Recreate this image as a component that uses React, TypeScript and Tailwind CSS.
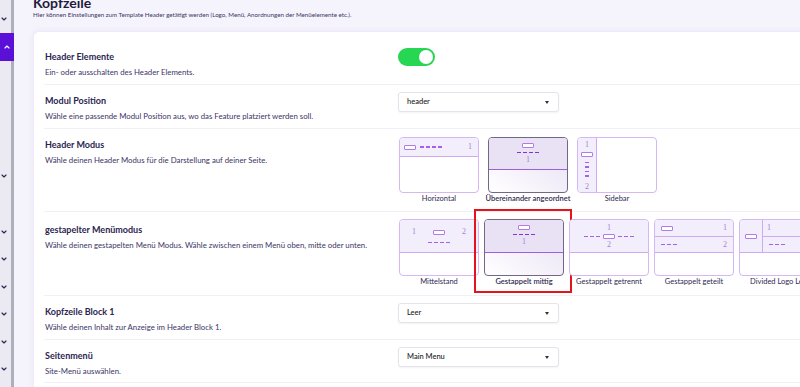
import { ChevronDown, ChevronUp } from "lucide-react";
import type { ReactNode } from "react";

const FONT = "font-['Lato','Noto_Sans',sans-serif]";

function Dashes({ n, dark }: { n: number; dark?: boolean }) {
  return (
    <span className="flex gap-[2px]">
      {Array.from({ length: n }).map((_, i) => (
        <span
          key={i}
          className={`h-[1.4px] w-[4px] ${dark ? "bg-[#8a2fe0]" : "bg-[#a660ea]"}`}
        />
      ))}
    </span>
  );
}

function Box() {
  return <span className="block h-[5px] w-[12px] shrink-0 rounded-[1px] border border-[#b27be9] bg-white" />;
}

function Num({ children }: { children: ReactNode }) {
  return (
    <span className="block font-['Liberation_Serif',serif] text-[8px] leading-[8px] text-[#a47fd6]">
      {children}
    </span>
  );
}

function Thumb({
  label,
  selected,
  height,
  children,
}: {
  label: string;
  selected?: boolean;
  height: string;
  children: ReactNode;
}) {
  return (
    <div className="flex w-[80px] flex-col items-center">
      <div
        className={`relative w-full overflow-hidden rounded-[4px] border text-[8px] leading-[8px] ${height} ${
          selected
            ? "border-[#736686] bg-linear-to-tr from-white to-[#e7dff3]"
            : "border-[#d6b6f4] bg-white"
        }`}
      >
        {children}
      </div>
      <span
        className={`mt-[1px] whitespace-nowrap text-[7.5px] leading-[9px] text-[#2f2a52] ${
          selected ? "font-semibold" : ""
        }`}
      >
        {label}
      </span>
    </div>
  );
}

function Select({ value }: { value: string }) {
  return (
    <div className="flex h-[20px] w-[161px] items-center justify-between rounded-[3px] border border-[#e4e2ea] bg-white pl-[8px] pr-[9px] shadow-[0_1px_2px_rgba(0,0,0,0.05)]">
      <span className="text-[7.5px] font-medium text-[#222]">{value}</span>
      <span className="h-0 w-0 border-x-[2.5px] border-t-[3px] border-x-transparent border-t-[#333]" />
    </div>
  );
}

function Row({
  title,
  desc,
  h,
  children,
  pt = "pt-[10px]",
}: {
  title: string;
  desc: string;
  h: string;
  children: ReactNode;
  pt?: string;
}) {
  return (
    <div className={`grid grid-cols-[354px_1fr] border-b border-[#f1eff5] ${h}`}>
      <div className={`pl-[1px] ${pt}`}>
        <div className="text-[9px] font-bold leading-[11px] text-[#2b2550]">{title}</div>
        <div className="mt-[5px] whitespace-nowrap text-[7.8px] leading-[11px] text-[#3b3566]">{desc}</div>
      </div>
      <div className="pt-[7px]">{children}</div>
    </div>
  );
}

function Chev({ up }: { up?: boolean }) {
  const C = up ? ChevronUp : ChevronDown;
  return <C size={8} strokeWidth={3.5} className={up ? "text-white" : "text-[#2b2550]"} />;
}

export default function App() {
  const band = "border-b border-[#cfa9f2] bg-[#f3eefb]";
  return (
    <div className={`flex h-[387px] w-[800px] overflow-hidden bg-[#f5f3fb] ${FONT}`}>
      {/* sidebar */}
      <div className="flex w-[14px] shrink-0 flex-col bg-[#ebeaf2] shadow-[inset_-3px_0_0_#adb0ba]">
        <div className="h-[5px]" />
        <div className="flex h-[28px] items-center"><Chev /></div>
        <div className="flex h-[28px] items-center justify-center bg-[#5a10d6]"><Chev up /></div>
        <div className="h-[101px]" />
        <div className="flex h-[27px] items-center"><Chev /></div>
        <div className="h-[29px]" />
        {[0, 1, 2, 3, 4, 5].map((i) => (
          <div key={i} className="flex h-[27.5px] items-center"><Chev /></div>
        ))}
      </div>

      {/* main */}
      <div className="flex min-w-0 flex-1 flex-col pl-[19px]">
        <div className="h-[31px] shrink-0">
          <h1 className="mt-[-4px] text-[14px] font-bold leading-[14px] text-[#1f1b40]">Kopfzeile</h1>
          <p className="mt-[1px] whitespace-nowrap text-[6.2px] leading-[8px] text-[#3b3566]">
            Hier können Einstellungen zum Template Header getätigt werden (Logo, Menü, Anordnungen der Menüelemente etc.).
          </p>
        </div>

        <div className="w-[800px] flex-1 rounded-tl-[6px] border-l border-t border-[#efe9fa] bg-white pt-[9px] shadow-[0_0_6px_rgba(120,90,200,0.08)]">
          <div className="ml-[10px]">
            <Row title="Header Elemente" desc="Ein- oder ausschalten des Header Elements." h="h-[44px]">
              <div className="flex h-[18px] w-[37px] items-center justify-end rounded-full bg-[#27d652] pr-[2px]">
                <span className="h-[14px] w-[14px] rounded-full bg-white" />
              </div>
            </Row>

            <Row
              title="Modul Position"
              desc="Wähle eine passende Modul Position aus, wo das Feature platziert werden soll."
              h="h-[44px]"
            >
              <Select value="header" />
            </Row>

            <Row
              title="Header Modus"
              desc="Wähle deinen Header Modus für die Darstellung auf deiner Seite."
              h="h-[83px]"
            >
              <div className="ml-[1px] mt-[1px] flex gap-[9px]">
                <Thumb label="Horizontal" height="h-[56px]">
                  <div className={`flex h-[19px] items-center px-[4px] ${band}`}>
                    <Box />
                    <span className="ml-[4px]"><Dashes n={4} /></span>
                    <span className="ml-auto mr-[2px]"><Num>1</Num></span>
                  </div>
                </Thumb>
                <Thumb label="Übereinander angeordnet" selected height="h-[56px]">
                  <div className="flex h-[32px] flex-col items-center border-b border-[#9b5fe0] bg-[#e9e2f5] pt-[5px]">
                    <Box />
                    <span className="mt-[4px]"><Dashes n={4} dark /></span>
                    <span className="mt-[3px]"><Num>1</Num></span>
                  </div>
                </Thumb>
                <Thumb label="Sidebar" height="h-[56px]">
                  <div className="flex h-full">
                    <div className="flex w-[19px] flex-col items-center border-r border-[#cfa9f2] bg-[#f3eefb] pt-[3px]">
                      <Num>1</Num>
                      <span className="mt-[3px]"><Box /></span>
                      <div className="mt-[5px] flex flex-col gap-[3px]">
                        {[0, 1, 2, 3].map((i) => (
                          <span key={i} className="h-[1.4px] w-[4px] bg-[#a660ea]" />
                        ))}
                      </div>
                      <span className="mt-[6px]"><Num>2</Num></span>
                    </div>
                  </div>
                </Thumb>
              </div>
            </Row>

            <Row
              title="gestapelter Menümodus"
              desc="Wähle deinen gestapelten Menü Modus. Wähle zwischen einem Menü oben, mitte oder unten."
              h="h-[84px]"
              pt="pt-[12px]"
            >
              <div className="ml-[1px] flex gap-[5px]">
                <Thumb label="Mittelstand" height="h-[57px]">
                  <div className={`relative h-[33px] ${band}`}>
                    <div className="flex items-center justify-between px-[12px] pt-[8px]">
                      <Num>1</Num>
                      <Box />
                      <Num>2</Num>
                    </div>
                    <div className="mt-[6px] flex justify-center"><Dashes n={4} /></div>
                  </div>
                </Thumb>
                <div className="relative">
                  <Thumb label="Gestappelt mittig" selected height="h-[57px]">
                    <div className="flex h-[33px] flex-col items-center border-b border-[#9b5fe0] bg-[#e9e2f5] pt-[5px]">
                      <Box />
                      <span className="mt-[4px]"><Dashes n={4} dark /></span>
                      <span className="mt-[3px]"><Num>1</Num></span>
                    </div>
                  </Thumb>
                  <div className="pointer-events-none absolute left-[-10px] top-[-10px] h-[84px] w-[98px] border-2 border-[#e5141c]" />
                </div>
                <Thumb label="Gestappelt getrennt" height="h-[57px]">
                  <div className={`flex h-[33px] flex-col items-center pt-[4px] ${band}`}>
                    <Num>1</Num>
                    <div className="mt-[2px] flex items-center gap-[3px]">
                      <Dashes n={3} />
                      <Box />
                      <Dashes n={3} />
                    </div>
                    <span className="mt-[2px]"><Num>2</Num></span>
                  </div>
                </Thumb>
                <Thumb label="Gestappelt geteilt" height="h-[57px]">
                  <div className={`h-[33px] ${band}`}>
                    <div className="flex h-[17px] items-center justify-between border-b border-[#cfa9f2] px-[6px]">
                      <Box />
                      <Num>1</Num>
                    </div>
                    <div className="flex h-[15px] items-center justify-between px-[6px]">
                      <Dashes n={3} />
                      <Num>2</Num>
                    </div>
                  </div>
                </Thumb>
                <Thumb label="Divided Logo Left" height="h-[57px]">
                  <div className={`flex h-[33px] ${band}`}>
                    <div className="flex w-[23px] items-center justify-center border-r border-[#cfa9f2]">
                      <Box />
                    </div>
                    <div className="flex-1">
                      <div className="flex h-[17px] items-center border-b border-[#cfa9f2] px-[4px]">
                        <Num>1</Num>
                      </div>
                      <div className="flex h-[15px] items-center px-[6px]">
                        <Dashes n={3} />
                      </div>
                    </div>
                  </div>
                </Thumb>
              </div>
            </Row>

            <Row title="Kopfzeile Block 1" desc="Wähle deinen Inhalt zur Anzeige im Header Block 1." h="h-[44px]">
              <Select value="Leer" />
            </Row>

            <Row title="Seitenmenü" desc="Site-Menü auswählen." h="h-[43px]">
              <Select value="Main Menu" />
            </Row>
          </div>
        </div>
      </div>
    </div>
  );
}
